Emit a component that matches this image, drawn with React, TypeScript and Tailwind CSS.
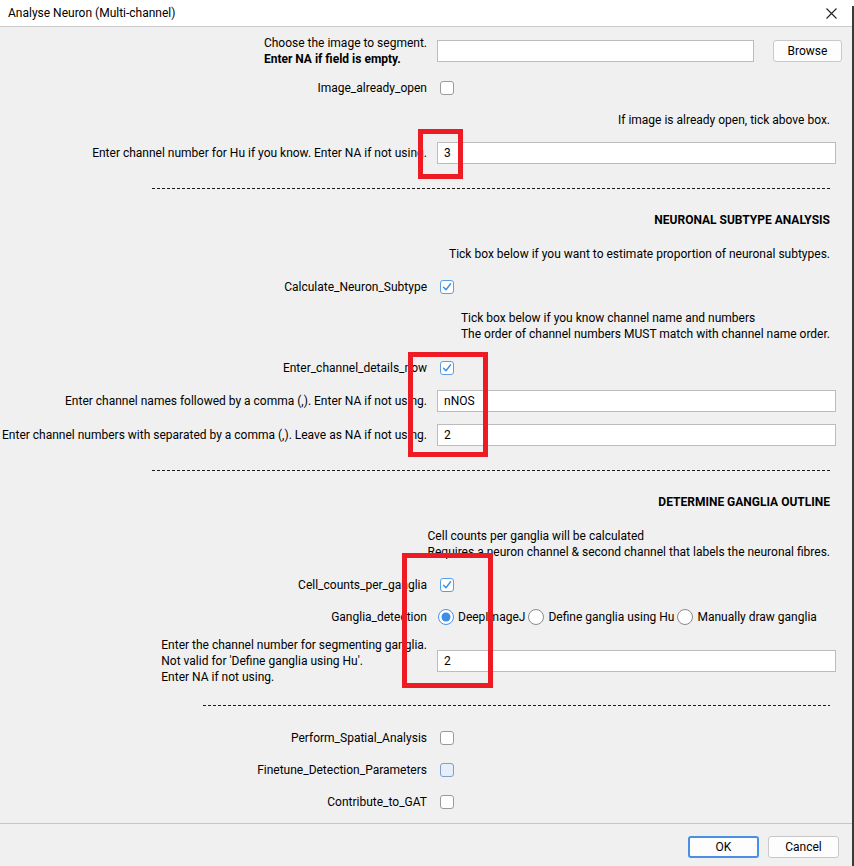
import React from 'react'

const font = { fontFamily: 'Roboto, "Noto Sans", sans-serif' }

function Box({ checked = false, hover = false }: { checked?: boolean; hover?: boolean }) {
  if (checked) {
    return (
      <svg width="14" height="14" viewBox="0 0 14 14" className="ml-[3px] block">
        <rect x="0.5" y="0.5" width="13" height="13" rx="2.5" fill="#ffffff" stroke="#5a9ee6" />
        <path d="M3.6 7.2 L6 9.8 L10.6 3.8" fill="none" stroke="#3d8ee6" strokeWidth="1.4" strokeLinecap="round" strokeLinejoin="round" />
      </svg>
    )
  }
  return (
    <div
      className={
        hover
          ? 'ml-[3px] h-[14px] w-[14px] rounded-[3px] border border-[#7f9ec8] bg-[#e6eef9]'
          : 'ml-[3px] h-[14px] w-[14px] rounded-[3px] border border-[#9a9a9a] bg-white'
      }
    />
  )
}

function Radio({ on = false }: { on?: boolean }) {
  return (
    <svg width="16" height="16" viewBox="0 0 16 16" className="block shrink-0">
      <circle cx="8" cy="8" r="7.5" fill="#ffffff" stroke={on ? '#4a90e2' : '#8a8a8a'} />
      {on && <circle cx="8" cy="8" r="4.5" fill="#3d8ee6" />}
    </svg>
  )
}

function Field({ value = '' }: { value?: string }) {
  return (
    <div className="flex h-[22px] w-full items-center border border-[#bcbcbc] bg-white pl-[6px] text-[12px] text-black">
      {value}
    </div>
  )
}

function Row({ label, children, className = '' }: { label: React.ReactNode; children: React.ReactNode; className?: string }) {
  return (
    <div className={`grid grid-cols-[427px_1fr] items-center gap-x-[10px] pr-[18px] ${className}`}>
      <div className="text-right">{label}</div>
      <div className="flex items-center">{children}</div>
    </div>
  )
}

function Dashes({ left }: { left: string }) {
  return (
    <div className={`${left} mr-[24px] h-px bg-[repeating-linear-gradient(to_right,#1a1a1a_0,#1a1a1a_3px,transparent_3px,transparent_5px)]`} />
  )
}

function Note({ children, className = '' }: { children: React.ReactNode; className?: string }) {
  return <div className={`pr-[24px] text-right leading-[16px] ${className}`}>{children}</div>
}

export default function App() {
  return (
    <div style={font} className="relative h-[866px] w-[854px] overflow-hidden bg-[#f0f0f0] text-[12px] leading-[16px] text-black">
      <div className="flex h-[27px] items-center justify-between border-b border-[#cccccc] bg-white pl-[8px] pr-[17px]">
        <span>Analyse Neuron (Multi-channel)</span>
        <svg width="11" height="11" viewBox="0 0 11 11">
          <path d="M0.5 0.5 L10.5 10.5 M10.5 0.5 L0.5 10.5" stroke="#222" strokeWidth="1.1" />
        </svg>
      </div>

      <div className="pt-[8px]">
        <div className="grid h-[32px] grid-cols-[427px_1fr] items-center gap-x-[10px]">
          <div className="flex justify-end leading-[16px]">
            <div className="text-left">
              <div>Choose the image to segment.</div>
              <div className="font-bold">Enter NA if field is empty.</div>
            </div>
          </div>
          <div className="flex items-center">
            <div className="w-[317px]">
              <Field />
            </div>
            <button className="ml-[19px] h-[22px] w-[69px] rounded-[3px] border border-[#c8c8c8] bg-[#fdfdfd] text-[12px]">Browse</button>
          </div>
        </div>

        <Row label="Image_already_open" className="mt-[13px] h-[14px]">
          <Box />
        </Row>

        <Note className="mt-[18px] h-[16px]">If image is already open, tick above box.</Note>

        <Row label="Enter channel number for Hu if you know. Enter NA if not using." className="mt-[14px] h-[22px]">
          <Field value="3" />
        </Row>

        <div className="mt-[24px]">
          <Dashes left="ml-[152px]" />
        </div>

        <Note className="mt-[23px] h-[16px] font-bold">NEURONAL SUBTYPE ANALYSIS</Note>
        <Note className="mt-[18px] h-[16px]">Tick box below if you want to estimate proportion of neuronal subtypes.</Note>

        <Row label="Calculate_Neuron_Subtype" className="mt-[17px] h-[14px]">
          <Box checked />
        </Row>

        <div className="mt-[17px] flex h-[32px] justify-end pr-[24px]">
          <div className="text-left">
            <div>Tick box below if you know channel name and numbers</div>
            <div>The order of channel numbers MUST match with channel name order.</div>
          </div>
        </div>

        <Row label="Enter_channel_details_now" className="mt-[18px] h-[14px]">
          <Box checked />
        </Row>

        <Row label="Enter channel names followed by a comma (,). Enter NA if not using." className="mt-[16px] h-[22px]">
          <Field value="nNOS" />
        </Row>

        <Row label="Enter channel numbers with separated by a comma (,). Leave as NA if not using." className="mt-[12px] h-[22px]">
          <Field value="2" />
        </Row>

        <div className="mt-[24px]">
          <Dashes left="ml-[152px]" />
        </div>

        <Note className="mt-[23px] h-[16px] font-bold">DETERMINE GANGLIA OUTLINE</Note>

        <div className="mt-[18px] flex h-[32px] justify-end pr-[24px]">
          <div className="text-left">
            <div>Cell counts per ganglia will be calculated</div>
            <div>Requires a neuron channel &amp; second channel that labels the neuronal fibres.</div>
          </div>
        </div>

        <Row label="Cell_counts_per_ganglia" className="mt-[17px] h-[14px]">
          <Box checked />
        </Row>

        <Row label="Ganglia_detection" className="mt-[18px] h-[16px]">
          <div className="ml-[1px] flex items-center">
            <Radio on />
            <span className="ml-[4px]">DeepImageJ</span>
            <span className="ml-[3px]"><Radio /></span>
            <span className="ml-[4px]">Define ganglia using Hu</span>
            <span className="ml-[3px]"><Radio /></span>
            <span className="ml-[4px]">Manually draw ganglia</span>
          </div>
        </Row>

        <div className="mt-[12px] grid h-[48px] grid-cols-[427px_1fr] items-center gap-x-[10px] pr-[18px]">
          <div className="flex justify-end">
            <div className="text-left">
              <div>Enter the channel number for segmenting ganglia.</div>
              <div>Not valid for 'Define ganglia using Hu'.</div>
              <div>Enter NA if not using.</div>
            </div>
          </div>
          <div className="-mt-[1px]">
            <Field value="2" />
          </div>
        </div>

        <div className="mt-[20px]">
          <Dashes left="ml-[203px]" />
        </div>

        <Row label="Perform_Spatial_Analysis" className="mt-[24px] h-[14px]">
          <Box />
        </Row>
        <Row label="Finetune_Detection_Parameters" className="mt-[18px] h-[14px]">
          <Box hover />
        </Row>
        <Row label="Contribute_to_GAT" className="mt-[18px] h-[14px]">
          <Box />
        </Row>

        <div className="mt-[15px] h-px bg-[#c6c6c6]" />

        <div className="mt-[12px] flex justify-end gap-[9px] pr-[15px]">
          <button className="h-[22px] w-[71px] rounded-[3px] border-2 border-[#4a90e2] bg-[#fdfdfd] text-[12px]">OK</button>
          <button className="h-[22px] w-[71px] rounded-[3px] border border-[#c8c8c8] bg-[#fdfdfd] text-[12px]">Cancel</button>
        </div>
      </div>

      <div className="absolute right-0 top-[6px] h-[860px] w-[2px] bg-[#3a3a3a]" />

      <div className="pointer-events-none absolute left-[418px] top-[129px] h-[50px] w-[45px] border-[5px] border-[#ed1c24]" />
      <div className="pointer-events-none absolute left-[408px] top-[352px] h-[105px] w-[80px] border-[5px] border-[#ed1c24]" />
      <div className="pointer-events-none absolute left-[402px] top-[553px] h-[135px] w-[91px] border-[5px] border-[#ed1c24]" />
    </div>
  )
}
